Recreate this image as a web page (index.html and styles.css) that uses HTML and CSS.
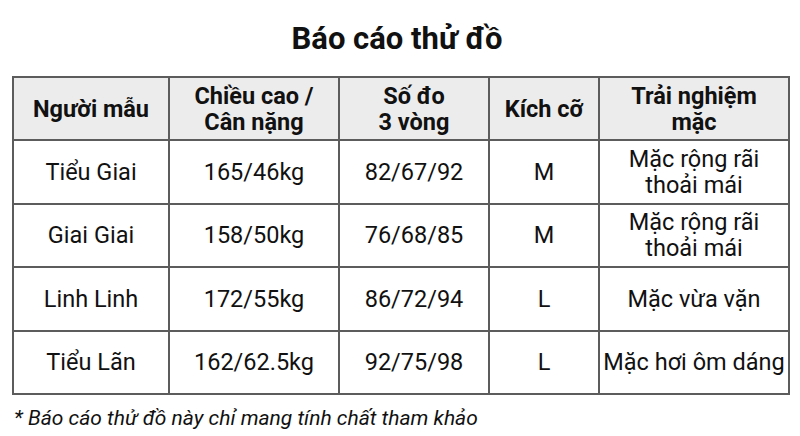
FILE: index.html
```html
<!DOCTYPE html>
<html lang="vi">
<head>
<meta charset="utf-8">
<title>Báo cáo thử đồ</title>
<link rel="stylesheet" href="styles.css">
</head>
<body>
<h1 class="title">Báo cáo thử đồ</h1>
<table class="report">
  <colgroup>
    <col class="c1"><col class="c2"><col class="c3"><col class="c4"><col class="c5">
  </colgroup>
  <thead>
    <tr>
      <th>Người mẫu</th>
      <th>Chiều cao /<br>Cân nặng</th>
      <th>Số đo<br>3 vòng</th>
      <th>Kích cỡ</th>
      <th>Trải nghiệm<br>mặc</th>
    </tr>
  </thead>
  <tbody>
    <tr><td>Tiểu Giai</td><td>165/46kg</td><td>82/67/92</td><td>M</td><td>Mặc rộng rãi<br>thoải mái</td></tr>
    <tr><td>Giai Giai</td><td>158/50kg</td><td>76/68/85</td><td>M</td><td>Mặc rộng rãi<br>thoải mái</td></tr>
    <tr><td>Linh Linh</td><td>172/55kg</td><td>86/72/94</td><td>L</td><td>Mặc vừa vặn</td></tr>
    <tr><td>Tiểu Lãn</td><td>162/62.5kg</td><td>92/75/98</td><td>L</td><td>Mặc hơi ôm dáng</td></tr>
  </tbody>
</table>
<p class="note">* Báo cáo thử đồ này chỉ mang tính chất tham khảo</p>
</body>
</html>
```
FILE: styles.css
```css
html, body {
  margin: 0;
  padding: 0;
  background: #ffffff;
}
body {
  width: 800px;
  height: 436px;
  overflow: hidden;
  font-family: Roboto, "Liberation Sans", sans-serif;
  color: #111111;
}
.title {
  margin: 21px 0 0 0;
  font-size: 31px;
  line-height: 36px;
  font-weight: 700;
  text-align: center;
  padding-right: 6px;
}
.report {
  margin: 19px 0 0 12px;
  width: 776px;
  border-collapse: collapse;
  table-layout: fixed;
  font-size: 23.5px;
  line-height: 26px;
}
.c1 { width: 156px; }
.c2 { width: 170px; }
.c3 { width: 150px; }
.c4 { width: 110px; }
.c5 { width: 190px; }
.report th,
.report td {
  border: 2px solid #5c5c5c;
  height: 61.4px;
  padding: 0;
  text-align: center;
  vertical-align: middle;
  white-space: nowrap;
}
.report th {
  background: #ececec;
  font-weight: 700;
}
.report td {
  font-weight: 400;
}
.note {
  margin: 11px 0 0 14px;
  font-size: 21px;
  line-height: 24px;
  font-style: italic;
}
```
